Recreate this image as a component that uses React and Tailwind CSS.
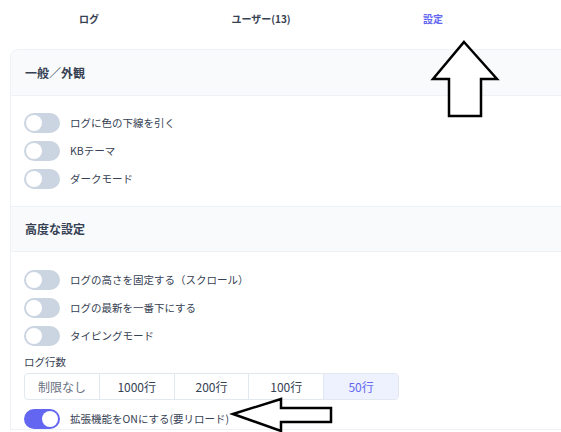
const TABS = [
  { label: 'ログ', active: false },
  { label: 'ユーザー(13)', active: false },
  { label: '設定', active: true },
]

const LINES = ['制限なし', '1000行', '200行', '100行', '50行']

function Toggle({ on, label }) {
  return (
    <div className="flex items-center gap-[10px] h-5">
      <div className={`w-9 h-5 rounded-full p-[2px] flex ${on ? 'bg-[#6366f1] justify-end' : 'bg-[#cbd5e1] justify-start'}`}>
        <div className="w-4 h-4 rounded-full bg-white" />
      </div>
      <span className="text-[10.5px] text-gray-700">{label}</span>
    </div>
  )
}

function SectionHeader({ title, top }) {
  return (
    <div className={`h-[46px] bg-[#f8fafc] border-b border-[#eef2f6] flex items-center px-[14px] ${top ? 'rounded-tl-lg' : 'border-t'}`}>
      <span className="text-[12px] font-bold text-gray-700">{title}</span>
    </div>
  )
}

export default function App() {
  return (
    <div className="relative w-[561px] h-[432px] overflow-hidden bg-white" style={{ fontFamily: '"Noto Sans CJK JP", "Noto Sans", sans-serif' }}>
      {/* Tabs */}
      <div className="flex pl-[3px] h-9 items-center">
        {TABS.map(t => (
          <div key={t.label} className={`w-[172px] text-center text-[10px] font-semibold ${t.active ? 'text-[#6366f1]' : 'text-gray-700'}`}>
            {t.label}
          </div>
        ))}
      </div>

      {/* Settings card */}
      <div className="ml-[10px] mt-[13px] w-[600px] border border-[#eef2f6] rounded-tl-lg">
        <SectionHeader title="一般／外観" top />
        <div className="px-[13px] pt-[17px] pb-[17px] flex flex-col gap-2">
          <Toggle label="ログに色の下線を引く" />
          <Toggle label="KBテーマ" />
          <Toggle label="ダークモード" />
        </div>

        <SectionHeader title="高度な設定" />
        <div className="px-[13px] pt-[18px] flex flex-col">
          <div className="flex flex-col gap-2">
            <Toggle label="ログの高さを固定する（スクロール）" />
            <Toggle label="ログの最新を一番下にする" />
            <Toggle label="タイピングモード" />
          </div>
          <div className="mt-[8px] text-[10.5px] text-gray-700 leading-4">ログ行数</div>
          <div className="mt-[3px] flex w-[375px] h-[27px] border border-slate-200 rounded overflow-hidden">
            {LINES.map((l, i) => (
              <div
                key={l}
                className={`flex-1 flex items-center justify-center text-[12px] ${i > 0 ? 'border-l border-slate-200' : ''} ${i === 4 ? 'bg-[#eef2ff] text-[#6366f1]' : i === 0 ? 'text-gray-500' : 'text-gray-700'}`}
              >
                {l}
              </div>
            ))}
          </div>
          <div className="mt-[9px]">
            <Toggle on label="拡張機能をONにする(要リロード)" />
          </div>
        </div>
      </div>

      {/* Annotation arrows */}
      <svg className="absolute inset-0 pointer-events-none" width="561" height="432" viewBox="0 0 561 432">
        <polygon
          points="464,42 497,79 481,79 481,116 449,116 449,79 433,79"
          fill="white"
          stroke="black"
          strokeWidth="2.5"
          strokeLinejoin="miter"
        />
        <polygon
          points="233,414 281,399 281,408 331,408 331,422 281,422 281,431"
          fill="white"
          stroke="black"
          strokeWidth="2.5"
          strokeLinejoin="miter"
        />
      </svg>
    </div>
  )
}
